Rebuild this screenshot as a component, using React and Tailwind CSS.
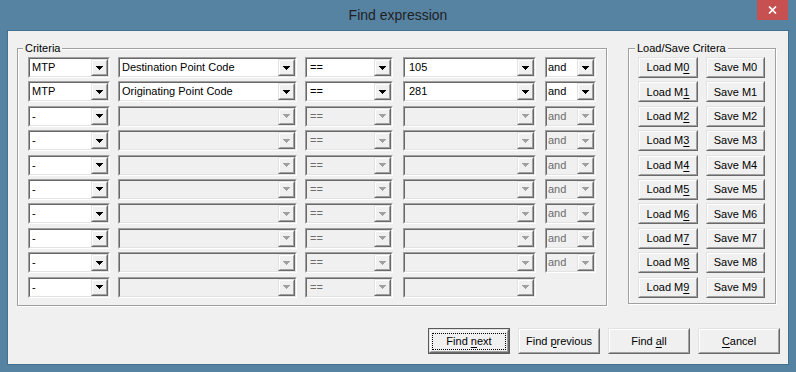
const FONT = "font-['Liberation_Sans',Arial,sans-serif]";

const rows = [
  { kind: "MTP", field: "Destination Point Code", op: "==", value: "105", join: "and", on: true },
  { kind: "MTP", field: "Originating Point Code", op: "==", value: "281", join: "and", on: true },
  ...Array.from({ length: 7 }, () => ({ kind: "-", field: "", op: "==", value: "", join: "and", on: false })),
  { kind: "-", field: "", op: "==", value: "", join: null, on: false },
];

const Arrow = ({ disabled }) => (
  <svg width="7" height="4" viewBox="0 0 7 4" className={disabled ? "fill-[#a0a0a0]" : "fill-black"}>
    <path d="M0 0h7v1H0zM1 1h5v1H1zM2 2h3v1H2zM3 3h1v1H3z" />
  </svg>
);

const Raised = ({ className = "", children }) => (
  <div
    className={`flex border border-t-[#e3e3e3] border-l-[#e3e3e3] border-r-[#696969] border-b-[#696969] bg-[#f0f0f0] ${className}`}
  >
    <div className="flex flex-1 items-center justify-center border border-t-white border-l-white border-r-[#a0a0a0] border-b-[#a0a0a0]">
      {children}
    </div>
  </div>
);

const Combo = ({ width, value, disabled, pad = "pl-[2px]" }) => (
  <div
    className={`flex h-[21px] shrink-0 border border-t-[#a0a0a0] border-l-[#a0a0a0] border-r-white border-b-white ${width}`}
  >
    <div
      className={`flex flex-1 border border-t-[#696969] border-l-[#696969] border-r-[#e3e3e3] border-b-[#e3e3e3] ${
        disabled ? "bg-[#f0f0f0]" : "bg-white"
      }`}
    >
      <span
        className={`flex flex-1 items-center text-[11px] leading-none ${pad} ${
          disabled ? "text-[#6d6d6d]" : "text-black"
        }`}
      >
        {value}
      </span>
      <Raised className="w-[17px]">
        <Arrow disabled={disabled} />
      </Raised>
    </div>
  </div>
);

const Mnemonic = ({ before, letter, after }) => (
  <span>
    {before}
    <span className="underline underline-offset-[2px]">{letter}</span>
    {after}
  </span>
);

const Group = ({ title, className = "", legendGap, children }) => (
  <fieldset
    className={`border border-[#a0a0a0] shadow-[inset_1px_1px_0_#fff,1px_1px_0_#fff] ${className}`}
  >
    <legend className={`${legendGap} bg-[#f0f0f0] px-[2px] text-[11px] leading-[14px] text-black`}>
      {title}
    </legend>
    {children}
  </fieldset>
);

const BottomButton = ({ children, isDefault }) =>
  isDefault ? (
    <div className="flex h-[26px] w-[82px] border border-[#5a5a5a]">
      <Raised className="flex-1">
        <span className="flex h-[17px] w-[74px] items-center justify-center border border-dotted border-black">
          {children}
        </span>
      </Raised>
    </div>
  ) : (
    <Raised className="h-[26px] w-[82px]">{children}</Raised>
  );

export default function App() {
  return (
    <div className={`flex h-[372px] w-[796px] flex-col bg-[#5783a3] ${FONT}`}>
      <div className="grid h-[31px] shrink-0 grid-cols-[1fr_auto_1fr]">
        <div />
        <div className="self-center pb-[1px] text-[14px] text-[#1f1f1f]">Find expression</div>
        <div className="flex justify-end">
          <div className="mr-[8px] flex h-[20px] w-[31px] items-center justify-center bg-[#c75050]">
            <svg width="9" height="8" viewBox="0 0 9 8">
              <path d="M1 0.5 L8 7.5 M8 0.5 L1 7.5" stroke="#fff" strokeWidth="1.7" />
            </svg>
          </div>
        </div>
      </div>

      <div className="ml-[8px] flex h-[333px] w-[780px] flex-col bg-[#f0f0f0] pl-[9px] pt-[10px] text-[11px] text-black shadow-[0_0_0_1px_#44708f]">
        <div className="flex items-start">
          <Group title="Criteria" className="w-[590px]" legendGap="ml-[5px]">
            <div className="flex flex-col gap-[3.4px] pb-[7px] pl-[10px] pt-[2px]">
              {rows.map((r, i) => (
                <div key={i} className="flex">
                  <Combo width="w-[82px]" value={r.kind} />
                  <div className="ml-[8px]">
                    <Combo width="w-[179px]" value={r.field} disabled={!r.on} />
                  </div>
                  <div className="ml-[8px]">
                    <Combo width="w-[88px]" value={r.op} disabled={!r.on} pad="pl-[3px]" />
                  </div>
                  <div className="ml-[10px]">
                    <Combo width="w-[133px]" value={r.value} disabled={!r.on} pad="pl-[4px]" />
                  </div>
                  {r.join && (
                    <div className="ml-[9px]">
                      <Combo width="w-[51px]" value={r.join} disabled={!r.on} pad="pl-[1px]" />
                    </div>
                  )}
                </div>
              ))}
            </div>
          </Group>

          <Group title="Load/Save Critera" className="ml-[21px] w-[148px]" legendGap="ml-[6px]">
            <div className="flex flex-col gap-[3.4px] pb-[5px] pl-[9px] pt-[2px]">
              {Array.from({ length: 10 }, (_, n) => (
                <div key={n} className="flex gap-[8px]">
                  <Raised className="h-[21px] w-[60px]">
                    <Mnemonic before="Load M" letter={String(n)} />
                  </Raised>
                  <Raised className="h-[21px] w-[59px]">Save M{n}</Raised>
                </div>
              ))}
            </div>
          </Group>
        </div>

        <div className="mb-[10px] mt-auto flex justify-end gap-[8px] pr-[8px]">
          <BottomButton isDefault>
            <Mnemonic before="Find " letter="n" after="ext" />
          </BottomButton>
          <BottomButton>
            <Mnemonic before="Find " letter="p" after="revious" />
          </BottomButton>
          <BottomButton>
            <Mnemonic before="Find " letter="a" after="ll" />
          </BottomButton>
          <BottomButton>
            <Mnemonic letter="C" after="ancel" />
          </BottomButton>
        </div>
      </div>
    </div>
  );
}
